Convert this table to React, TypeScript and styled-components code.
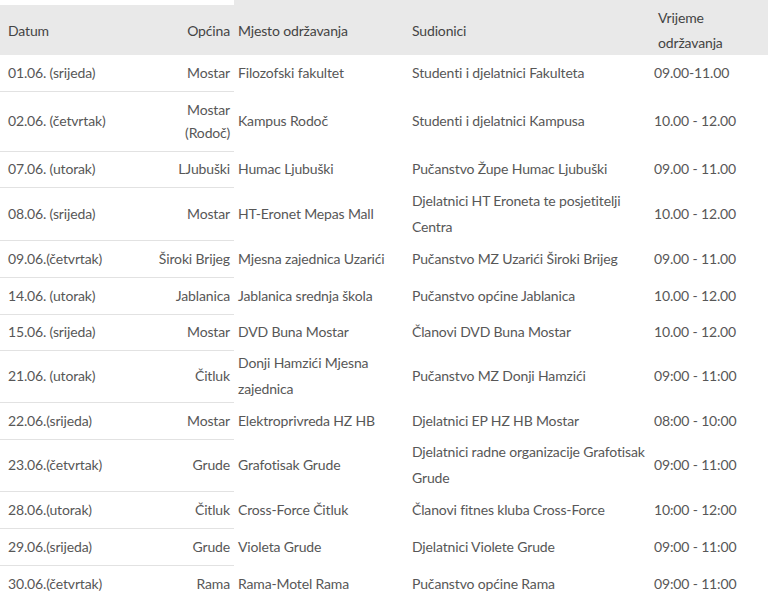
import React from 'react';
import styled, { createGlobalStyle } from 'styled-components';

const GlobalStyle = createGlobalStyle`
  html, body {
    margin: 0;
    padding: 0;
    background: #fff;
  }
  body {
    font-family: Lato, 'Open Sans', sans-serif;
    font-size: 14px;
    letter-spacing: -0.15px;
    color: #575757;
  }
`;

const Table = styled.table`
  width: 768px;
  border-collapse: collapse;
  table-layout: fixed;
`;

const Col = styled.col<{ $w: number }>`
  width: ${(p) => p.$w}px;
`;

const HeadCell = styled.th<{ $align?: string; $edged?: boolean; $pl?: number }>`
  height: 48px;
  padding: 0 4px 0 ${(p) => p.$pl ?? 4}px;
  background: #e9e9e9;
  border-top: 5px solid ${(p) => (p.$edged ? '#fff' : '#e9e9e9')};
  text-align: ${(p) => p.$align || 'left'};
  font-weight: 400;
  line-height: 25px;
  color: #444;
  vertical-align: middle;
`;

const Row = styled.tr<{ $h: number }>`
  height: ${(p) => p.$h}px;
`;

const Cell = styled.td<{ $align?: string; $lined?: boolean; $pl?: number; $lh?: number }>`
  padding: 0 4px 0 ${(p) => p.$pl ?? 4}px;
  text-align: ${(p) => p.$align || 'left'};
  line-height: ${(p) => p.$lh ?? 26}px;
  border-bottom: ${(p) => (p.$lined ? '1px solid #e2e2e2' : '0')};
  vertical-align: middle;
  white-space: nowrap;
`;

type Item = {
  date: string;
  town: React.ReactNode;
  place: React.ReactNode;
  who: React.ReactNode;
  time: string;
  h: number;
  townLh?: number;
};

const rows: Item[] = [
  { date: '01.06. (srijeda)', town: 'Mostar', place: 'Filozofski fakultet', who: 'Studenti i djelatnici Fakulteta', time: '09.00-11.00', h: 36 },
  { date: '02.06. (četvrtak)', town: <>Mostar<br />(Rodoč)</>, place: 'Kampus Rodoč', who: 'Studenti i djelatnici Kampusa', time: '10.00 - 12.00', h: 60, townLh: 23 },
  { date: '07.06. (utorak)', town: 'LJubuški', place: 'Humac Ljubuški', who: 'Pučanstvo Župe Humac Ljubuški', time: '09.00 - 11.00', h: 36 },
  { date: '08.06. (srijeda)', town: 'Mostar', place: 'HT-Eronet Mepas Mall', who: <>Djelatnici HT Eroneta te posjetitelji<br />Centra</>, time: '10.00 - 12.00', h: 53 },
  { date: '09.06.(četvrtak)', town: 'Široki Brijeg', place: 'Mjesna zajednica Uzarići', who: 'Pučanstvo MZ Uzarići Široki Brijeg', time: '09.00 - 11.00', h: 37 },
  { date: '14.06. (utorak)', town: 'Jablanica', place: 'Jablanica srednja škola', who: 'Pučanstvo općine Jablanica', time: '10.00 - 12.00', h: 37 },
  { date: '15.06. (srijeda)', town: 'Mostar', place: 'DVD Buna Mostar', who: 'Članovi DVD Buna Mostar', time: '10.00 - 12.00', h: 36 },
  { date: '21.06. (utorak)', town: 'Čitluk', place: <>Donji Hamzići Mjesna<br />zajednica</>, who: 'Pučanstvo MZ Donji Hamzići', time: '09:00 - 11:00', h: 51 },
  { date: '22.06.(srijeda)', town: 'Mostar', place: 'Elektroprivreda HZ HB', who: 'Djelatnici EP HZ HB Mostar', time: '08:00 - 10:00', h: 37 },
  { date: '23.06.(četvrtak)', town: 'Grude', place: 'Grafotisak Grude', who: <>Djelatnici radne organizacije Grafotisak<br />Grude</>, time: '09:00 - 11:00', h: 51 },
  { date: '28.06.(utorak)', town: 'Čitluk', place: 'Cross-Force Čitluk', who: 'Članovi fitnes kluba Cross-Force', time: '10:00 - 12:00', h: 37 },
  { date: '29.06.(srijeda)', town: 'Grude', place: 'Violeta Grude', who: 'Djelatnici Violete Grude', time: '09:00 - 11:00', h: 37 },
  { date: '30.06.(četvrtak)', town: 'Rama', place: 'Rama-Motel Rama', who: 'Pučanstvo općine Rama', time: '09:00 - 11:00', h: 37 },
];

export default function App() {
  return (
    <>
      <GlobalStyle />
      <Table>
        <colgroup>
          <Col $w={150} />
          <Col $w={84} />
          <Col $w={174} />
          <Col $w={246} />
          <Col $w={114} />
        </colgroup>
        <thead>
          <tr>
            <HeadCell $edged $pl={8}>Datum</HeadCell>
            <HeadCell $edged $align="right">Općina</HeadCell>
            <HeadCell>Mjesto održavanja</HeadCell>
            <HeadCell>Sudionici</HeadCell>
            <HeadCell>Vrijeme<br />održavanja</HeadCell>
          </tr>
        </thead>
        <tbody>
          {rows.map((r, i) => {
            const lined = i < rows.length - 1;
            return (
              <Row key={r.date} $h={r.h}>
                <Cell $lined={lined} $pl={8}>{r.date}</Cell>
                <Cell $lined={lined} $align="right" $lh={r.townLh}>{r.town}</Cell>
                <Cell>{r.place}</Cell>
                <Cell>{r.who}</Cell>
                <Cell $pl={0}>{r.time}</Cell>
              </Row>
            );
          })}
        </tbody>
      </Table>
    </>
  );
}
